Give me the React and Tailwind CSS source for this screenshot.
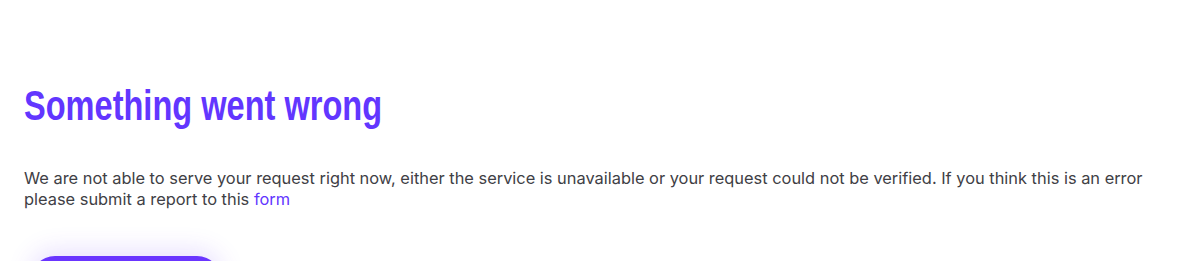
import React from 'react';

const App = () => {
    return (
        <div className="min-h-screen bg-white px-6 pt-[80px] font-['Inter',sans-serif]">
            {/* Heading */}
            <h1 className="origin-left scale-x-[0.775] text-[42px] leading-[52px] font-bold text-[#6236ff] font-['Liberation_Sans',Arial,sans-serif] whitespace-nowrap">
                Something went wrong
            </h1>

            {/* Message */}
            <p className="mt-[36px] text-[16.4px] leading-[21px] text-[#404045]">
                We are not able to serve your request right now, either the service is unavailable or your request could not be verified. If you think this is an error please submit a report to this{' '}
                <a href="#" className="text-[#6236ff]">form</a>
            </p>

            {/* Action */}
            <div className="mt-[46px] pl-[6px]">
                <button className="h-[50px] w-[192px] rounded-full bg-[#6a35ff] text-white font-semibold shadow-[0_-6px_24px_rgba(106,53,255,0.15)]">
                    Go back
                </button>
            </div>
        </div>
    );
};

export default App;
